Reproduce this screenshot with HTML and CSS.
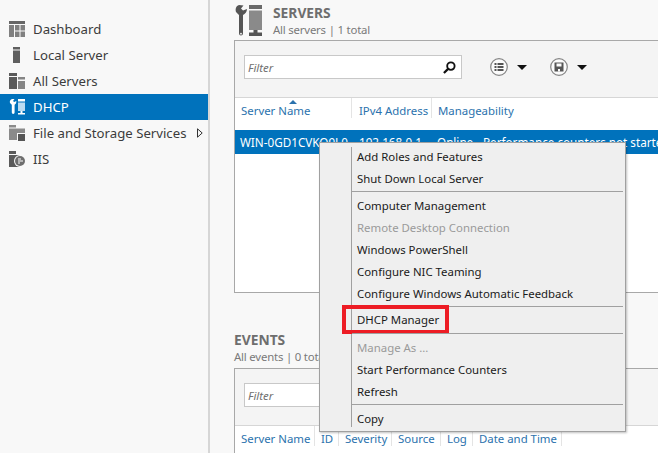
FILE: index.html
```html
<!DOCTYPE html>
<html lang="en">
<head>
<meta charset="utf-8">
<title>Server Manager - DHCP</title>
<link rel="stylesheet" href="styles.css">
</head>
<body>
<div class="app">
  <nav class="sidebar">
    <div class="nav-item">
      <svg class="nav-icon" viewBox="0 0 16 16"><path fill="#666" d="M0 0h16v3H0z"/><path fill="#808080" d="M0 4h5v12H0zM6 4h4.500v5.500H6zM11.500 4H16v5.500h-4.500zM6 10.500h4.500V16H6zM11.500 10.500H16V16h-4.500z"/></svg>
      <span>Dashboard</span>
    </div>
    <div class="nav-item">
      <svg class="nav-icon" viewBox="0 0 16 16"><path fill="#5f5f5f" d="M4 0h7v2.500H4zM4 3.500h7V16H4z"/></svg>
      <span>Local Server</span>
    </div>
    <div class="nav-item">
      <svg class="nav-icon" viewBox="0 0 16 16"><path fill="#5a5a5a" d="M0 0h8v3H0zM0 4h8v12H0z"/><path fill="#858585" d="M9 4h7v2.500H9zM9 8h7v8H9z"/></svg>
      <span>All Servers</span>
    </div>
    <div class="nav-item active">
      <svg class="nav-icon" viewBox="0 0 16 16"><path fill="#fff" d="M3 0C1 .5 .5 2.500 1 4l1.800 1.800V13.500a1.400 1.400 0 0 0 2.800 0V5.800C7 5 7.500 3.500 7.300 2L5.200 3 4 2l1.500-2z"/><path fill="#fff" d="M9 0h7v2.500H9z"/><path fill="#bcdcf2" d="M9 3.500h7V12H9z"/><path fill="#fff" d="M11.500 12h2v2H16v1.500H9V14h2.500z"/></svg>
      <span>DHCP</span>
    </div>
    <div class="nav-item">
      <svg class="nav-icon" viewBox="0 0 16 16"><path fill="#8a8a8a" d="M0 0h7v2.500H0zM0 3.500h16V9H9v6H0z"/><path fill="#555" d="M9 9h7v7H9z"/><path fill="#f8f8f8" d="M8 8h1v8H8zM9 8h7v1H9z"/></svg>
      <span class="nav-label">File and Storage Services</span>
      <svg class="nav-arrow" viewBox="0 0 6 10"><path fill="none" stroke="#333" d="M.5 .8v8.400L5.200 5z"/></svg>
    </div>
    <div class="nav-item">
      <svg class="nav-icon" viewBox="0 0 16 16"><path fill="#5a5a5a" d="M0 0h7v3H0zM0 4h11v12H0z"/><circle cx="11" cy="10" r="6" fill="#f8f8f8"/><circle cx="11" cy="10" r="5" fill="#6e6e6e"/><path fill="#b5b5b5" d="M9 7h3v2h2v2h-3v2H9z"/></svg>
      <span>IIS</span>
    </div>
  </nav>

  <main class="content">
    <section class="group servers">
      <header class="group-head">
        <svg class="group-icon" viewBox="0 0 28 31"><path fill="#555" fill-rule="evenodd" d="M5 0C2 1 1 4 2 7l3 3v18.500a2 2 0 0 0 4 0V10c2-1 4-3 4-6L9 5.500 7 3.500 9.500 .5zM7 27.800a.9.9 0 1 0 0 1.800.9.9 0 0 0 0-1.800z"/><path fill="#6a6a6a" d="M15 0h13v4H15z"/><path fill="#8a8a8a" d="M15 5.500h13V25H15z"/><path fill="#555" d="M19.500 25h4v2.500H28V31H15v-3.500h4.500z"/></svg>
        <div class="group-titles">
          <h2>SERVERS</h2>
          <p>All servers | 1 total</p>
        </div>
      </header>
      <div class="panel">
        <div class="toolbar">
          <div class="filter">
            <span>Filter</span>
            <svg class="search" viewBox="0 0 14 14"><circle cx="8.500" cy="5.500" r="4" fill="none" stroke="#111" stroke-width="2"/><path stroke="#111" stroke-width="2.400" d="M5.500 8.500 1 13"/></svg>
          </div>
          <div class="tool">
            <svg class="round" viewBox="0 0 18 18"><circle cx="9" cy="9" r="8.300" fill="#fbfbfb" stroke="#858585" stroke-width="1.200"/><path fill="#555" d="M4.500 5h2v2h-2zM7.500 5h6v2h-6zM4.500 8h2v2h-2zM7.500 8h6v2h-6zM4.500 11h2v2h-2zM7.500 11h6v2h-6z"/></svg>
            <i class="caret"></i>
          </div>
          <div class="tool">
            <svg class="round" viewBox="0 0 18 18"><circle cx="9" cy="9" r="8.300" fill="#fbfbfb" stroke="#858585" stroke-width="1.200"/><path fill="#555" d="M4.500 4.500h9v9h-9z"/><path fill="#fbfbfb" d="M6.500 5.500h5v3h-5zM8 11h2v2.500H8z"/></svg>
            <i class="caret"></i>
          </div>
        </div>
        <div class="columns">
          <div class="col col-name sorted">Server Name</div>
          <div class="col col-ip">IPv4 Address</div>
          <div class="col">Manageability</div>
        </div>
        <div class="row selected">
          <span class="cell-name">WIN-0GD1CVKO9L0</span>
          <span class="cell-ip">192.168.0.1</span>
          <span class="cell-state">Online - Performance counters not started</span>
        </div>
      </div>
    </section>

    <section class="group events">
      <header class="group-head plain">
        <div class="group-titles">
          <h2>EVENTS</h2>
          <p>All events | 0 total</p>
        </div>
      </header>
      <div class="panel">
        <div class="toolbar">
          <div class="filter"><span>Filter</span></div>
        </div>
        <div class="columns tight">
          <div class="col">Server Name</div>
          <div class="col">ID</div>
          <div class="col">Severity</div>
          <div class="col">Source</div>
          <div class="col">Log</div>
          <div class="col">Date and Time</div>
        </div>
      </div>
    </section>
  </main>
</div>

<ul class="menu">
  <li>Add Roles and Features</li>
  <li>Shut Down Local Server</li>
  <li class="sep"></li>
  <li>Computer Management</li>
  <li class="off">Remote Desktop Connection</li>
  <li>Windows PowerShell</li>
  <li>Configure NIC Teaming</li>
  <li>Configure Windows Automatic Feedback</li>
  <li class="sep"></li>
  <li class="marked">DHCP Manager</li>
  <li class="sep"></li>
  <li class="off">Manage As ...</li>
  <li>Start Performance Counters</li>
  <li>Refresh</li>
  <li class="sep"></li>
  <li>Copy</li>
</ul>
</body>
</html>
```
FILE: styles.css
```css
*, *::before, *::after { box-sizing: border-box; }
html, body { margin: 0; height: 100%; }
body {
  position: relative;
  width: 658px;
  height: 453px;
  overflow: hidden;
  background: #f8f8f8;
  color: #333;
  font: 11.4px/17px "Noto Sans", sans-serif;
}
.app { display: flex; height: 453px; }

.sidebar {
  flex: 0 0 210px;
  padding-top: 16px;
  border-right: 2px solid #d6d6d6;
}
.nav-item {
  display: flex;
  align-items: center;
  height: 26px;
  padding-left: 9px;
  font-size: 13.2px;
  color: #3c3c3c;
}
.nav-item.active { background: #0072bc; color: #fff; }
.nav-icon { width: 16px; height: 16px; margin-right: 8px; flex: none; }
.nav-label { flex: 1; white-space: nowrap; }
.nav-arrow { width: 6px; height: 10px; margin-right: 5px; flex: none; }

.content { flex: 1; min-width: 0; padding-left: 24px; }
.group-head { display: flex; align-items: flex-start; height: 40px; gap: 11px; padding-top: 4px; }
.group-head.plain { height: 37px; padding-top: 0; }
.group-icon { width: 28px; height: 31px; margin-top: 1px; flex: none; }
h2 { margin: 0; font-size: 13.8px; line-height: 17px; font-weight: 700; color: #6e6e6e; }
.group-titles p { margin: 1px 0 0; font-size: 11.4px; line-height: 16px; letter-spacing: -.2px; color: #7a7a7a; white-space: nowrap; }

.panel {
  width: 440px;
  background: #fff;
  border: 1px solid #a8a8a8;
  border-right: 0;
}
.servers .panel { height: 253px; }
.events { margin-top: 38px; }
.events .panel { height: 90px; border-bottom: 0; }

.toolbar {
  display: flex;
  align-items: flex-start;
  height: 57px;
  padding: 14px 9px 0;
  background: #f4f4f4;
  border-bottom: 1px solid #d6d6d6;
}
.filter {
  display: flex;
  align-items: center;
  justify-content: space-between;
  width: 218px;
  height: 24px;
  padding: 0 3px;
  background: #fff;
  border: 1px solid #c8c8c8;
  font-style: italic;
  color: #707070;
}
.search { width: 13px; height: 13px; margin-right: 2px; }
.tool { display: flex; align-items: center; gap: 9px; height: 24px; margin-left: 28px; }
.tool + .tool { margin-left: 23px; }
.round { width: 18px; height: 18px; }
.caret {
  width: 0; height: 0;
  border-left: 5px solid transparent;
  border-right: 5px solid transparent;
  border-top: 5px solid #111;
}

.columns { display: flex; height: 32px; color: #2b72ad; }
.col {
  height: 20px;
  padding: 4px 6px 0;
  border-right: 1px solid #e4e4e4;
  white-space: nowrap;
}
.col-name { width: 117px; position: relative; }
.col-ip { width: 80px; padding-left: 7px; }
.sorted::before {
  content: "";
  position: absolute;
  left: 54px;
  top: 2px;
  width: 8px;
  height: 4px;
  border-left: 4px solid transparent;
  border-right: 4px solid transparent;
  border-bottom: 4px solid #2b72ad;
}
.columns .col:last-child { border-right: 0; }
.columns.tight {
  display: grid;
  grid-template-columns: 80px 24px 53px 49px 32px 89px;
}
.columns.tight .col:last-child { border-right: 1px solid #e4e4e4; }

.row.selected {
  display: flex;
  align-items: center;
  height: 24px;
  background: #0072bc;
  color: #fff;
  font-size: 11.7px;
  white-space: nowrap;
}
.cell-name { width: 117px; padding-left: 5px; }
.cell-ip { width: 80px; padding-left: 7px; }
.cell-state { padding-left: 5px; }

.menu {
  position: absolute;
  left: 319px;
  top: 142px;
  width: 307px;
  height: 290px;
  margin: 0;
  padding: 3px 2px 2px 0;
  list-style: none;
  background: #efefef;
  border: 1px solid #a0a0a0;
  box-shadow: 1px 1px 2px rgba(0, 0, 0, .25);
  color: #1a1a1a;
}
.menu::before {
  content: "";
  position: absolute;
  left: 31px;
  top: 4px;
  bottom: 4px;
  width: 1px;
  background: #a0a0a0;
}
.menu li {
  position: relative;
  height: 22px;
  padding-left: 37px;
  line-height: 22px;
  white-space: nowrap;
}
.menu li.sep { height: 5px; margin: 0 0 0 32px; padding: 0; }
.menu li.sep::after {
  content: "";
  position: absolute;
  left: 0; right: 0; top: 1px;
  height: 1px;
  background: #a0a0a0;
}
.menu li.off { color: #9a9a9a; }
.menu li.marked { margin: -1px 0 1px; }
.menu li.marked::after {
  content: "";
  position: absolute;
  left: 22px;
  top: -4px;
  width: 107px;
  height: 29px;
  border: 4px solid #ed1c24;
}
```
